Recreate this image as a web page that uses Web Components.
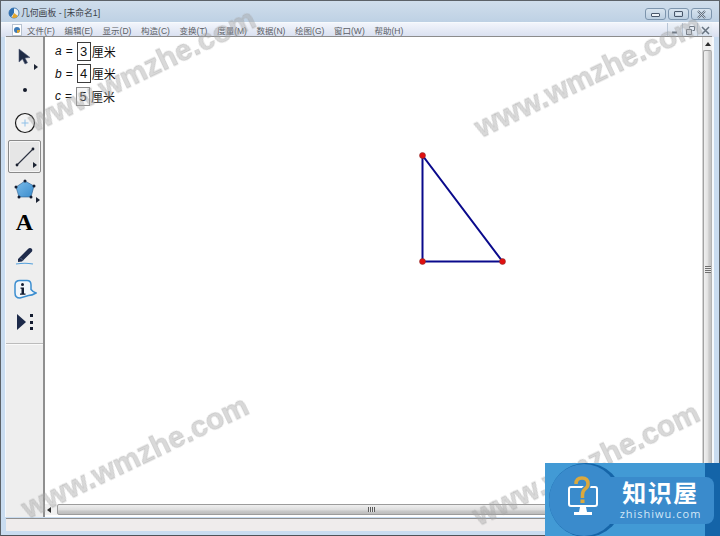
<!DOCTYPE html>
<html lang="zh">
<head>
<meta charset="utf-8">
<title>几何画板</title>
<style>
  html, body { margin: 0; height: 100%; }
  body {
    position: relative;
    width: 720px;
    height: 536px;
    overflow: hidden;
    font-family: "Liberation Sans", "Noto Sans CJK SC", sans-serif;
  }
</style>
</head>
<body>
<sketch-window>
  <title-bar slot="title">几何画板 - [未命名1]</title-bar>
  <menu-bar slot="menu"></menu-bar>
  <tool-box slot="tools"></tool-box>
  <sketch-canvas slot="canvas">
    <measure-row name="a" value="3"></measure-row>
    <measure-row name="b" value="4"></measure-row>
    <measure-row name="c" value="5" soft></measure-row>
  </sketch-canvas>
</sketch-window>
<water-mark style="left:142px;top:70px">www.wmzhe.com</water-mark>
<water-mark style="left:588px;top:76px">www.wmzhe.com</water-mark>
<water-mark style="left:135px;top:457px">www.wmzhe.com</water-mark>
<water-mark style="left:586px;top:464px">www.wmzhe.com</water-mark>
<site-badge></site-badge>

<script>
class SketchWindow extends HTMLElement {
  constructor() {
    super();
    this.attachShadow({ mode: 'open' });
    this.shadowRoot.innerHTML = `
      <style>
        :host {
          display: grid;
          grid-template-columns: 5px 1fr 7px;
          grid-template-rows: 36px 1fr 18px;
          width: 720px;
          height: 536px;
          box-sizing: border-box;
          border: 1px solid #5c6268;
          border-bottom-color: #4e5257;
          background: #c9dcf0;
        }
        .head {
          grid-column: 1 / 4;
          display: flex;
          flex-direction: column;
        }
        .left {
          border-right: 1px solid #f4f8fc;
        }
        .main {
          display: grid;
          grid-template-columns: 39px 1fr;
          min-height: 0;
          min-width: 0;
          border-top: 1px solid #8c8c8c;
          margin-top: -1px;
        }
        .right {
          border-left: 2px solid #f6f9fc;
        }
        .foot {
          grid-column: 2 / 3;
          display: flex;
          flex-direction: column;
          border-top: 1px solid #8f8f8f;
          margin-top: 1px;
        }
        .status {
          height: 12px;
          background: #efecec;
        }
      </style>
      <div class="head">
        <slot name="title"></slot>
        <slot name="menu"></slot>
      </div>
      <div class="left"></div>
      <div class="main">
        <slot name="tools"></slot>
        <slot name="canvas"></slot>
      </div>
      <div class="right"></div>
      <div></div>
      <div class="foot"><div class="status"></div></div>
      <div></div>
    `;
  }
}

class TitleBar extends HTMLElement {
  constructor() {
    super();
    this.attachShadow({ mode: 'open' });
    this.shadowRoot.innerHTML = `
      <style>
        :host {
          display: flex;
          align-items: center;
          gap: 1px;
          height: 21px;
          box-sizing: border-box;
          padding: 1px 7px 0 7px;
          background: linear-gradient(#d0deec, #bed1e4);
          font-size: 8.800px;
          color: #3b4148;
        }
        svg { flex: none; }
        .text { flex: 1; white-space: nowrap; }
        .btns { display: flex; gap: 2px; align-self: flex-start; margin-top: 6px; }
        button {
          display: flex;
          align-items: center;
          justify-content: center;
          width: 21px;
          height: 12px;
          padding: 0;
          border: 1px solid #7d95ad;
          border-radius: 3px;
          background: linear-gradient(#d8e4ef, #bccfe1);
        }
      </style>
      <svg width="12" height="13" viewBox="0 0 12 13">
        <circle cx="6" cy="7" r="5" fill="#e9f0f6" stroke="#4a7fb5"/>
        <path d="M6 2 A5 5 0 0 0 3 11 L6 7z" fill="#2f6fb0"/>
        <path d="M6 7 L10 10 A5 5 0 0 1 4 11.500z" fill="#e3a52a"/>
      </svg>
      <span class="text"><slot></slot></span>
      <div class="btns">
        <button><svg width="11" height="6"><rect x="1.500" y="2.500" width="8" height="3" rx=".5" fill="#eef3f8" stroke="#49576a"/></svg></button>
        <button><svg width="11" height="8"><rect x="1.500" y="1.500" width="8" height="5" rx=".5" fill="none" stroke="#49576a"/><path d="M3 3h5v2H3z" fill="#dfe8f0"/></svg></button>
        <button><svg width="11" height="9"><path d="M2 1 L9 8 M9 1 L2 8" stroke="#5a6878" stroke-width="2"/><path d="M2 1 L9 8 M9 1 L2 8" stroke="#dfe8f0" stroke-width=".8"/></svg></button>
      </div>
    `;
  }
}

class MenuBar extends HTMLElement {
  constructor() {
    super();
    this.attachShadow({ mode: 'open' });
    const items = ['文件(F)', '编辑(E)', '显示(D)', '构造(C)', '变换(T)', '度量(M)', '数据(N)', '绘图(G)', '窗口(W)', '帮助(H)'];
    this.shadowRoot.innerHTML = `
      <style>
        :host {
          display: flex;
          align-items: center;
          height: 15px;
          box-sizing: border-box;
          padding-left: 11px;
          border-top: 1px solid #f7fafd;
          background: linear-gradient(#f2f5fb, #d9e0f0);
          font-size: 8.500px;
          color: #5c5f66;
        }
        .doc { flex: none; margin-right: 5px; }
        ul {
          display: flex;
          gap: 9.700px;
          flex: 1;
          margin: 0;
          padding: 0;
          list-style: none;
          white-space: nowrap;
        }
        .btns { display: flex; align-self: stretch; margin-right: 7px; }
        .btns span {
          display: flex;
          align-items: center;
          justify-content: center;
          width: 14px;
          border-left: 1px solid #b9c6d6;
          background: linear-gradient(#eef2f8, #d5dfec);
        }
      </style>
      <svg class="doc" width="10" height="12" viewBox="0 0 10 12">
        <rect x=".5" y=".5" width="9" height="11" fill="#fff" stroke="#b7c2d0"/>
        <circle cx="5" cy="6" r="3" fill="#3d79b6"/>
        <path d="M5 6 L8 6 A3 3 0 0 1 5 9z" fill="#e0a52e"/>
      </svg>
      <ul>${items.map(t => `<li>${t}</li>`).join('')}</ul>
      <div class="btns">
        <span><svg width="8" height="8"><path d="M1 6.500h5" stroke="#717b87" stroke-width="2"/></svg></span>
        <span><svg width="9" height="9"><path d="M3.500 2.500V.5h5v4H6.500M.5 3.500h5v5h-5z" fill="none" stroke="#717b87"/></svg></span>
        <span><svg width="9" height="9"><path d="M1 1 L8 8 M8 1 L1 8" stroke="#66727f" stroke-width="1.500"/></svg></span>
      </div>
    `;
  }
}

class ToolBox extends HTMLElement {
  constructor() {
    super();
    this.attachShadow({ mode: 'open' });
    this.shadowRoot.innerHTML = `
      <style>
        :host {
          display: flex;
          flex-direction: column;
          box-sizing: border-box;
          padding: 4px 2px 0;
          background: #eeeeee;
          border-right: 2px solid #8f8f8f;
        }
        .tool {
          position: relative;
          display: flex;
          align-items: center;
          justify-content: center;
          height: 33px;
          flex: none;
          box-sizing: border-box;
        }
        .on {
          border: 1px solid #8a8a8a;
          border-radius: 2px;
          background: #e6e6e6;
          box-shadow: inset 0 0 0 1px #f6f6f6;
        }
        .more {
          position: absolute;
          right: 3px;
          bottom: 4px;
          width: 0;
          height: 0;
          border-left: 4px solid #1c2433;
          border-top: 3px solid transparent;
          border-bottom: 3px solid transparent;
        }
        .text-a {
          margin-top: -2px;
          font: bold 24px "Liberation Serif", serif;
          color: #000;
          line-height: 1;
        }
        .lift { margin-top: -2px; }
        .drop { margin-top: 2px; }
        hr {
          margin: 5px -2px 0;
          border: 0;
          border-top: 1px solid #bcbcbc;
          border-bottom: 1px solid #fafafa;
        }
      </style>
      <div class="tool">
        <svg class="lift" width="16" height="18" viewBox="0 0 16 18"><path d="M2 1 L2 14 L5.500 11 L8 16 L10.500 14.800 L8 10 L13 9.500z" fill="#1e2a44" stroke="#56607a" stroke-width=".6"/></svg>
        <i class="more"></i>
      </div>
      <div class="tool"><svg class="lift" width="6" height="6"><circle cx="3" cy="3" r="2" fill="#141a2a"/></svg></div>
      <div class="tool">
        <svg class="lift" width="22" height="22" viewBox="0 0 22 22"><circle cx="11" cy="11" r="9.500" fill="#f4f4f4" stroke="#1c1c1c" stroke-width="1.200"/><path d="M11 7.500v7M7.500 11h7" stroke="#8fc0e8" stroke-width="1"/></svg>
      </div>
      <div class="tool on">
        <svg width="22" height="22" viewBox="0 0 22 22"><path d="M3 19 L19 3" stroke="#2a3040" stroke-width="1.100"/><circle cx="3" cy="19" r="1.400" fill="#1a2030"/><circle cx="19" cy="3" r="1.400" fill="#1a2030"/></svg>
        <i class="more"></i>
      </div>
      <div class="tool">
        <svg width="24" height="22" viewBox="0 0 24 22"><defs><linearGradient id="pg" x1="0" y1="0" x2="1" y2="1"><stop offset="0" stop-color="#7cbcea"/><stop offset="1" stop-color="#3a8ccc"/></linearGradient></defs><path d="M12 2 L21 7 L18 18 L6 18 L3 8z" fill="url(#pg)" stroke="#2c5c8c" stroke-width=".6"/><g fill="#141c30"><circle cx="12" cy="2" r="1.500"/><circle cx="21" cy="7" r="1.500"/><circle cx="18" cy="18" r="1.500"/><circle cx="6" cy="18" r="1.500"/><circle cx="3" cy="8" r="1.500"/></g></svg>
        <i class="more" style="right:1px;bottom:3px"></i>
      </div>
      <div class="tool"><span class="text-a">A</span></div>
      <div class="tool">
        <svg width="20" height="20" viewBox="0 0 20 20"><path d="M3 13 L13 3 Q15 1 17 3 Q18 5 16 6.500 L7 15.500 L3 16z" fill="#1f2c4c"/><path d="M5.500 12 L8 14.500" stroke="#6a7896" stroke-width=".8"/><path d="M1 18 Q10 16.500 18 18" fill="none" stroke="#54a0dc" stroke-width="1.200"/></svg>
      </div>
      <div class="tool">
        <svg class="drop" width="24" height="22" viewBox="0 0 24 22"><path d="M7 1.500 H14 Q18 1.500 18 6 V10.500 Q20 13 23 14 Q19 16.500 15.500 16.500 L7 19 Q2 19 2 14 V6 Q2 1.500 7 1.500z" fill="#f2f6fa" stroke="#3c8ed0" stroke-width="1.500"/><circle cx="9.500" cy="5.500" r="1.500" fill="#141c30"/><path d="M7.500 8.500h3.500v6h1.500v1.300H7v-1.300h1.500v-4.700h-1z" fill="#141c30"/></svg>
      </div>
      <div class="tool">
        <svg width="20" height="18" viewBox="0 0 20 18"><path d="M2 1 L11 9 L2 17z" fill="#1d2a4a"/><g fill="#141c30"><rect x="15" y="1" width="3" height="3"/><rect x="15" y="8" width="3" height="3"/><rect x="15" y="14" width="3" height="3"/></g></svg>
      </div>
      <hr>
    `;
  }
}

class SketchCanvas extends HTMLElement {
  constructor() {
    super();
    this.attachShadow({ mode: 'open' });
    this.shadowRoot.innerHTML = `
      <style>
        :host {
          display: grid;
          grid-template-columns: 1fr 10px;
          grid-template-rows: 1fr 11px 2px;
          min-height: 0;
          min-width: 0;
          background: #fff;
        }
        .paper {
          grid-column: 1;
          grid-row: 1;
          position: relative;
          display: flex;
          flex-direction: column;
          gap: 4.500px;
          padding: 5px 0 0 10px;
          overflow: hidden;
        }
        .shape { position: absolute; left: 0; top: 0; }
        .scroll {
          position: relative;
          display: flex;
          align-items: center;
          justify-content: center;
          box-sizing: border-box;
        }
        .v {
          grid-column: 2;
          grid-row: 1 / 3;
          flex-direction: column;
          padding-top: 13px;
          background: #f0f0f0;
          border-left: 1px solid #d4d4d4;
        }
        .v .thumb {
          flex: 1;
          width: 100%;
          box-sizing: border-box;
          border: 1px solid #a2a2a2;
          border-right-color: #b4b4b4;
          border-radius: 2px;
          background: linear-gradient(90deg, #f0f0f0, #e2e2e2 50%, #cdcdcd 70%, #c2c2c2);
        }
        .h {
          grid-column: 1;
          grid-row: 2;
          padding-left: 12px;
          background: #f0f0f0;
        }
        .h .thumb {
          width: 100%;
          height: 100%;
          box-sizing: border-box;
          border: 1px solid #9c9c9c;
          border-radius: 2px;
          background: linear-gradient(#efefef, #dedede 50%, #c8c8c8 70%, #bcbcbc);
        }
        .up {
          position: absolute;
          top: 5px;
          left: 2px;
          border-left: 3px solid transparent;
          border-right: 3px solid transparent;
          border-bottom: 4px solid #2c2c2c;
        }
        .back {
          position: absolute;
          left: 2px;
          top: 3px;
          border-top: 3px solid transparent;
          border-bottom: 3px solid transparent;
          border-right: 4px solid #2c2c2c;
        }
        .grip-v {
          position: absolute;
          left: 2px;
          top: 50%;
          width: 6px;
          height: 7px;
          margin-top: -10px;
          background: repeating-linear-gradient(#6f6f6f 0 1px, #e8e8e8 1px 2px);
        }
        .grip-h {
          position: absolute;
          left: 323px;
          top: 3px;
          width: 7px;
          height: 5px;
          background: repeating-linear-gradient(90deg, #5c5c5c 0 1px, #e8e8e8 1px 2px);
        }
      </style>
      <div class="paper">
        <slot></slot>
        <svg class="shape" width="657" height="467" viewBox="0 0 657 467">
          <path d="M377.500 118.500 V224.500 H457.500z" fill="none" stroke="#0a0a8c" stroke-width="2"/>
          <g fill="#e01010" stroke="#7a3030" stroke-width=".5">
            <circle cx="377.500" cy="118.500" r="3"/>
            <circle cx="377.500" cy="224.500" r="3"/>
            <circle cx="457.500" cy="224.500" r="3"/>
          </g>
        </svg>
      </div>
      <div class="scroll v"><i class="up"></i><div class="thumb"></div><i class="grip-v"></i></div>
      <div class="scroll h"><i class="back"></i><div class="thumb"></div><i class="grip-h"></i></div>
    `;
  }
}

class MeasureRow extends HTMLElement {
  constructor() {
    super();
    this.attachShadow({ mode: 'open' });
    const soft = this.hasAttribute('soft');
    this.shadowRoot.innerHTML = `
      <style>
        :host {
          display: flex;
          align-items: center;
          height: 18px;
          font-size: 12px;
          color: #111;
          white-space: nowrap;
        }
        i { margin-right: 4px; }
        .eq { width: 11px; }
        .box {
          display: flex;
          align-items: center;
          justify-content: center;
          width: 14px;
          height: 19px;
          box-sizing: border-box;
          margin-right: 1px;
          border: 1px solid ${soft ? '#8d8d8d' : '#3c3c3c'};
          background: ${soft ? '#f6f6f6' : '#fff'};
          font-size: 13px;
        }
      </style>
      <i>${this.getAttribute('name')}</i>
      <span class="eq">=</span>
      <span class="box">${this.getAttribute('value')}</span>
      <span>厘米</span>
    `;
  }
}

class WaterMark extends HTMLElement {
  constructor() {
    super();
    this.attachShadow({ mode: 'open' });
    this.shadowRoot.innerHTML = `
      <style>
        :host {
          position: absolute;
          display: block;
          transform: translate(-50%, -50%) rotate(-25.500deg);
          font: bold 30px "Liberation Sans", sans-serif;
          color: rgba(165, 165, 165, .42);
          -webkit-text-stroke: .8px rgba(165, 165, 165, .42);
          white-space: nowrap;
          filter: blur(.5px);
          pointer-events: none;
        }
      </style>
      <slot></slot>
    `;
  }
}

class SiteBadge extends HTMLElement {
  constructor() {
    super();
    this.attachShadow({ mode: 'open' });
    this.shadowRoot.innerHTML = `
      <style>
        :host {
          position: absolute;
          right: 0;
          bottom: 0;
          display: block;
          width: 175px;
          height: 73px;
          overflow: hidden;
          background: linear-gradient(90deg, #429ad5 160px, #1464a8 160px);
        }
        .arc {
          position: absolute;
          left: 4px;
          top: 0;
          width: 74px;
          height: 74px;
          border-radius: 50%;
          background: #1565a8;
        }
        .disc {
          position: absolute;
          left: 4px;
          top: 1px;
          width: 70px;
          height: 72px;
          border-radius: 50%;
          background: #3a8bcc;
        }
        .pill {
          position: absolute;
          left: 40px;
          top: 14px;
          width: 129px;
          height: 47px;
          display: flex;
          flex-direction: column;
          align-items: center;
          padding-left: 22px;
          box-sizing: border-box;
          border-radius: 0 8px 8px 0;
          background: #3a8bcc;
          color: #fff;
        }
        .cn {
          font: bold 24px/30px "Noto Sans CJK SC", sans-serif;
          letter-spacing: 1.500px;
          white-space: nowrap;
        }
        .en {
          font: 11px/14px "Open Sans", sans-serif;
          letter-spacing: 1px;
          color: #d3e8f7;
        }
        svg { position: absolute; left: 18px; top: 12px; }
      </style>
      <div class="arc"></div>
      <div class="disc"></div>
      <div class="pill"><span class="cn">知识屋</span><span class="en">zhishiwu.com</span></div>
      <svg width="40" height="44" viewBox="0 0 40 44">
        <rect x="6" y="12" width="28" height="19" rx="2" fill="none" stroke="#fff" stroke-width="2"/>
        <path d="M17 32h6l1 5h5v3H11v-3h5z" fill="#fff"/>
        <path d="M13 9 Q13 3 19 3 Q25 3 25 9 Q25 12 22 14 Q19.500 16 19.500 20 V23" fill="none" stroke="#3a8bcc" stroke-width="6"/>
        <path d="M13 9 Q13 3 19 3 Q25 3 25 9 Q25 12 22 14 Q19.500 16 19.500 20 V23" fill="none" stroke="#dba93e" stroke-width="3.500"/>
        <rect x="17.500" y="24.500" width="4" height="3.500" fill="#dba93e"/>
      </svg>
    `;
  }
}

customElements.define('sketch-window', SketchWindow);
customElements.define('title-bar', TitleBar);
customElements.define('menu-bar', MenuBar);
customElements.define('tool-box', ToolBox);
customElements.define('sketch-canvas', SketchCanvas);
customElements.define('measure-row', MeasureRow);
customElements.define('water-mark', WaterMark);
customElements.define('site-badge', SiteBadge);
</script>
</body>
</html>
